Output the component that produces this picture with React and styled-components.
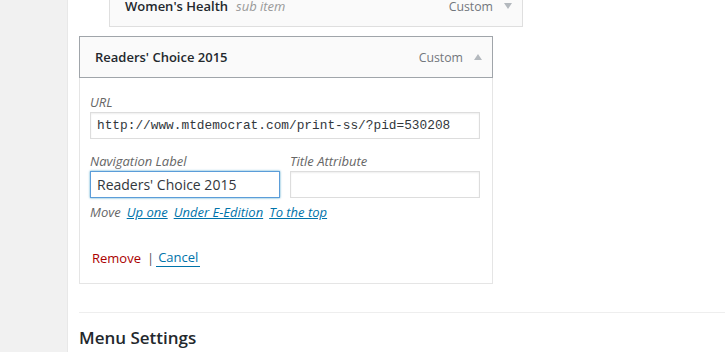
import React from 'react';
import styled, { createGlobalStyle } from 'styled-components';

const GlobalStyle = createGlobalStyle`
  html, body {
    margin: 0;
    padding: 0;
    background: #fff;
    font-family: 'Open Sans', 'Liberation Sans', sans-serif;
    font-size: 13px;
    color: #23282d;
    overflow: hidden;
  }
`;

const Page = styled.div`
  display: flex;
  min-height: 352px;
`;

const Sidebar = styled.div`
  width: 67px;
  flex-shrink: 0;
  background: #f1f1f1;
  border-right: 1px solid #e8e8e8;
`;

const Content = styled.div`
  flex: 1;
  padding-left: 11px;
`;

const MenuItem = styled.div`
  width: 414px;
  margin-left: ${(p) => (p.depth ? p.depth * 30 : 0)}px;
  margin-top: ${(p) => p.offset || 0}px;
`;

const Handle = styled.div`
  box-sizing: border-box;
  height: 42px;
  display: flex;
  align-items: center;
  padding: 0 10px 0 15px;
  background: #fafafa;
  border: 1px solid ${(p) => (p.active ? '#a0a5aa' : '#dfdfdf')};
`;

const ItemTitle = styled.span`
  font-weight: 600;
  font-size: 13px;
  color: #23282d;
`;

const SubLabel = styled.span`
  font-style: italic;
  color: #999;
  margin-left: 8px;
`;

const ItemType = styled.span`
  margin-left: auto;
  color: #72777c;
  font-size: 12.3px;
`;

const Arrow = styled.svg`
  margin-left: 11px;
  width: 8px;
  height: 6px;
  fill: #b4b9be;
`;

const Settings = styled.div`
  box-sizing: border-box;
  padding: 15px 10px 16px 10px;
  border: 1px solid #e5e5e5;
  border-top: none;
  background: #fff;
`;

const FieldRow = styled.div`
  display: flex;
  gap: 10px;
  margin-top: ${(p) => p.gap || 0}px;
`;

const Field = styled.label`
  display: flex;
  flex-direction: column;
  width: ${(p) => p.width}px;
`;

const Label = styled.span`
  font-style: italic;
  color: #666;
  line-height: 18px;
  margin-bottom: 1px;
`;

const Input = styled.input`
  box-sizing: border-box;
  height: 27px;
  width: 100%;
  margin: 0;
  padding: 0 6px;
  border: 1px solid ${(p) => (p.focused ? '#5b9dd9' : '#ddd')};
  box-shadow: ${(p) =>
    p.focused ? '0 0 2px rgba(30, 140, 190, 0.8)' : 'inset 0 1px 2px rgba(0, 0, 0, 0.07)'};
  background: #fff;
  color: #32373c;
  font-family: ${(p) => (p.mono ? "'Liberation Mono', monospace" : "'Open Sans', sans-serif")};
  font-size: ${(p) => (p.mono ? '12.8px' : '14px')};
  outline: none;
`;

const MoveRow = styled.div`
  margin-top: 5px;
  line-height: 18px;
  font-style: italic;
  color: #666;
  display: flex;
  gap: 6px;
`;

const MoveLink = styled.a`
  color: #0073aa;
  text-decoration: underline;
`;

const Actions = styled.div`
  margin-top: 28px;
  line-height: 18px;
  padding-left: 2px;
  display: flex;
  align-items: center;
`;

const RemoveLink = styled.a`
  color: #a00;
  text-decoration: none;
`;

const Sep = styled.span`
  color: #555;
  margin: 0 2px 0 6px;
`;

const CancelLink = styled.a`
  color: #0073aa;
  text-decoration: none;
  border-bottom: 1px solid #0073aa;
  padding: 0 2px;
  line-height: 17px;
`;

const MenuSettings = styled.div`
  margin-top: 28px;
  border-top: 1px solid #eee;
`;

const SectionTitle = styled.h3`
  margin: 13px 0 0;
  font-size: 17px;
  font-weight: 600;
  line-height: 24px;
  color: #23282d;
`;

const Caret = ({ up }) => (
  <Arrow viewBox="0 0 8 6">
    {up ? <polygon points="0,6 4,0 8,6" /> : <polygon points="0,0 8,0 4,6" />}
  </Arrow>
);

const App = () => (
  <Page>
    <GlobalStyle />
    <Sidebar />
    <Content>
      <MenuItem depth={1} offset={-15}>
        <Handle>
          <ItemTitle>Women's Health</ItemTitle>
          <SubLabel>sub item</SubLabel>
          <ItemType>Custom</ItemType>
          <Caret />
        </Handle>
      </MenuItem>

      <MenuItem offset={9}>
        <Handle active>
          <ItemTitle>Readers' Choice 2015</ItemTitle>
          <ItemType>Custom</ItemType>
          <Caret up />
        </Handle>
        <Settings>
          <FieldRow>
            <Field width={390}>
              <Label>URL</Label>
              <Input mono defaultValue="http://www.mtdemocrat.com/print-ss/?pid=530208" />
            </Field>
          </FieldRow>
          <FieldRow gap={13}>
            <Field width={190}>
              <Label>Navigation Label</Label>
              <Input focused defaultValue="Readers' Choice 2015" />
            </Field>
            <Field width={190}>
              <Label>Title Attribute</Label>
              <Input defaultValue="" />
            </Field>
          </FieldRow>
          <MoveRow>
            <span>Move</span>
            <MoveLink href="#">Up one</MoveLink>
            <MoveLink href="#">Under E-Edition</MoveLink>
            <MoveLink href="#">To the top</MoveLink>
          </MoveRow>
          <Actions>
            <RemoveLink href="#">Remove</RemoveLink>
            <Sep>|</Sep>
            <CancelLink href="#">Cancel</CancelLink>
          </Actions>
        </Settings>
      </MenuItem>

      <MenuSettings>
        <SectionTitle>Menu Settings</SectionTitle>
      </MenuSettings>
    </Content>
  </Page>
);

export default App;
